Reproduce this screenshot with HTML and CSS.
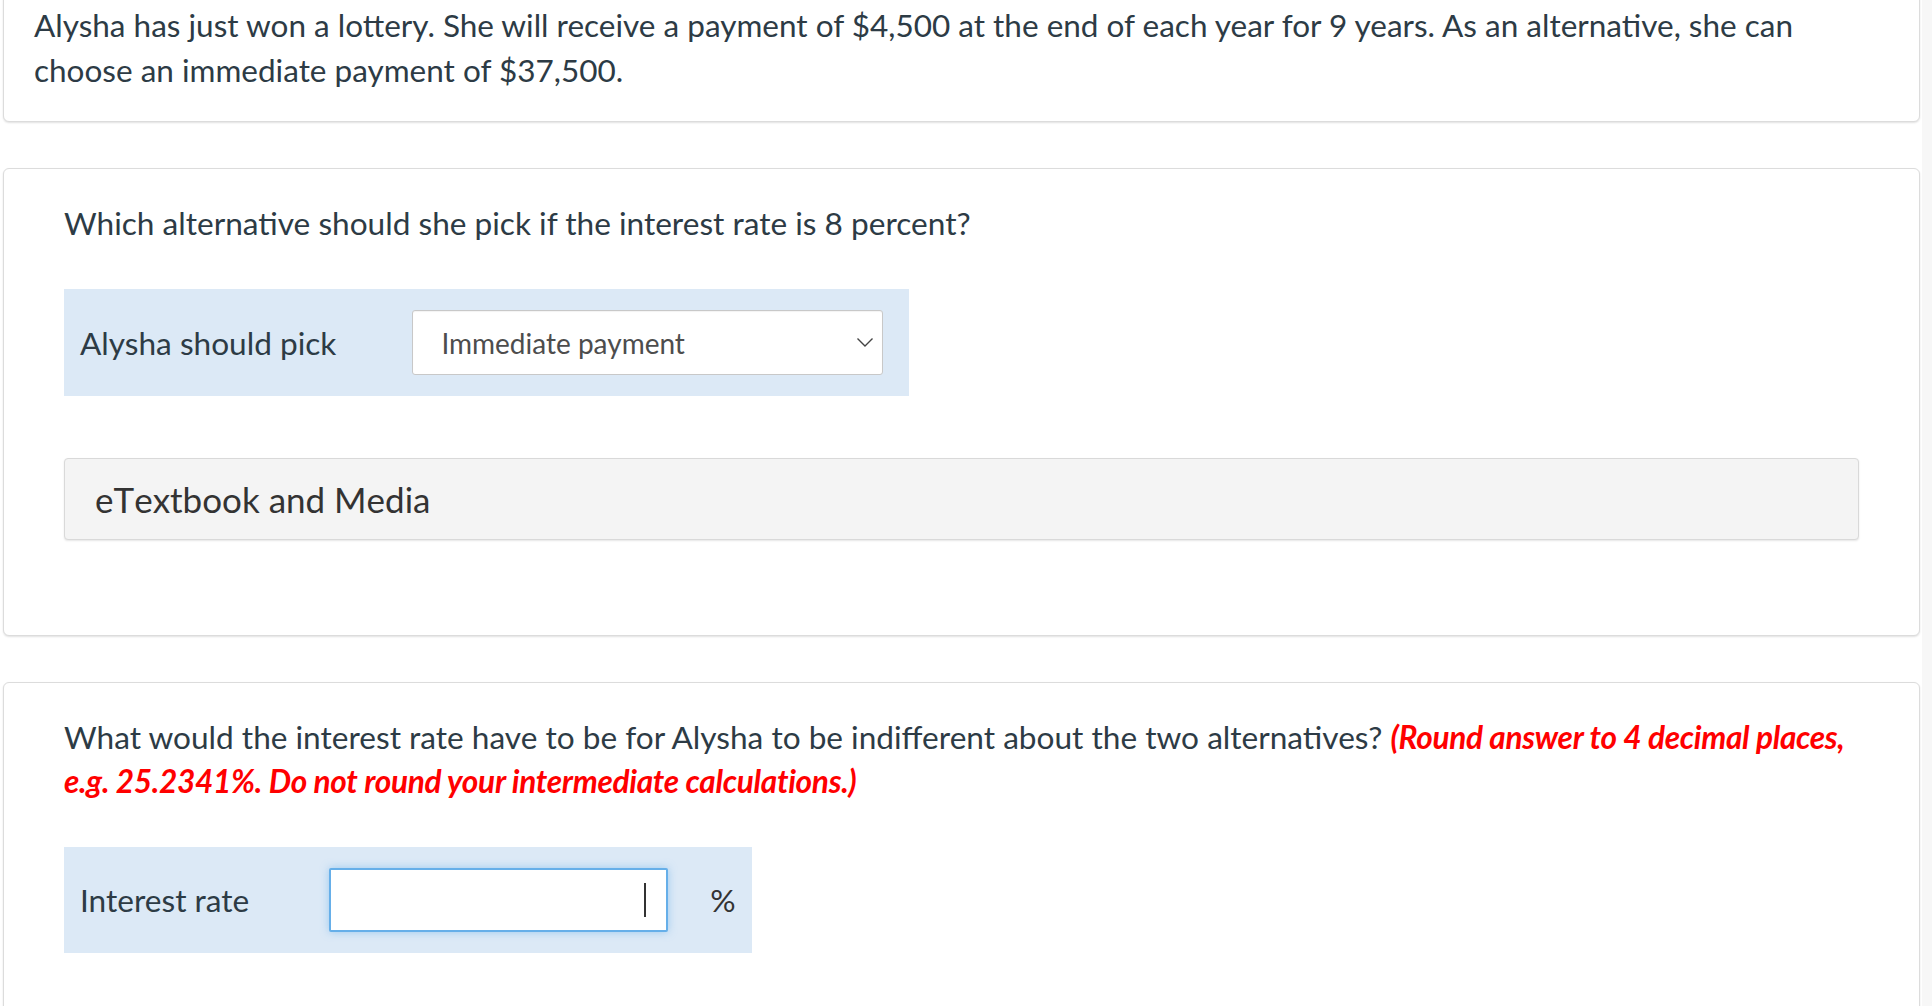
FILE: index.html
```html
<!DOCTYPE html>
<html lang="en">
<head>
<meta charset="utf-8">
<title>Question</title>
<link rel="stylesheet" href="styles.css">
</head>
<body>
<div class="page">
  <main class="content">
    <section class="card card-intro">
      <p class="intro-text">Alysha has just won a lottery. She will receive a payment of $4,500 at the end of each year for 9 years. As an alternative, she can choose an immediate payment of $37,500.</p>
    </section>

    <section class="card card-part">
      <p class="question">Which alternative should she pick if the interest rate is 8 percent?</p>
      <div class="answer-row answer-row-select">
        <span class="answer-label">Alysha should pick</span>
        <div class="select-box">
          <span class="select-value">Immediate payment</span>
          <svg class="chevron" width="18" height="11" viewBox="0 0 18 11" aria-hidden="true"><path d="M1.5 1.5 L9 9 L16.5 1.5" fill="none" stroke="#444" stroke-width="1.4"/></svg>
        </div>
      </div>
      <div class="media-box">eTextbook and Media</div>
    </section>

    <section class="card card-part card-last">
      <p class="question">What would the interest rate have to be for Alysha to be indifferent about the two alternatives? <em class="hint">(Round answer to 4 decimal places, e.g. 25.2341%. Do not round your intermediate calculations.)</em></p>
      <div class="answer-row answer-row-input">
        <span class="answer-label">Interest rate</span>
        <div class="text-input"><span class="caret"></span></div>
        <span class="unit">%</span>
      </div>
    </section>
  </main>
  <div class="scroll-track"></div>
</div>
</body>
</html>
```

FILE: styles.css
```css
html, body {
  margin: 0;
  padding: 0;
  background: #ffffff;
  height: 100%;
  overflow: hidden;
}

body {
  font-family: "Lato", "Liberation Sans", sans-serif;
  color: #2d3b45;
}

.page {
  display: flex;
  height: 1006px;
  overflow: hidden;
}

.content {
  flex: 1;
  padding: 0 2px 0 3px;
  display: flex;
  flex-direction: column;
  gap: 46px;
}

.scroll-track {
  width: 10px;
  background: #f7f7f7;
  flex-shrink: 0;
}

.card {
  background: #ffffff;
  border: 1px solid #dcdcdc;
  border-radius: 6px;
  box-shadow: 0 1px 2px rgba(0, 0, 0, 0.12);
  flex-shrink: 0;
}

.card-intro {
  margin-top: -30px;
  padding: 32px 30px 28px 30px;
}

.intro-text {
  margin: 0;
  font-size: 31.5px;
  line-height: 45px;
}

.card-part {
  padding: 32px 60px 95px 60px;
}

.question {
  margin: 0 0 44px 0;
  font-size: 31.6px;
  line-height: 44px;
}

.hint {
  color: #ff0000;
  font-weight: 700;
  font-style: italic;
  letter-spacing: -0.3px;
}

.answer-row {
  display: inline-flex;
  align-items: center;
  background: #dce9f6;
  padding: 21px 16px;
  align-self: flex-start;
}

.answer-label {
  font-size: 31.6px;
  color: #2d3b45;
  margin-right: 76px;
}

.select-box {
  width: 471px;
  height: 65px;
  box-sizing: border-box;
  background: #ffffff;
  border: 1px solid #c8c8c8;
  border-radius: 3px;
  display: flex;
  align-items: center;
  justify-content: space-between;
  padding: 0 8px 0 28px;
  margin-right: 10px;
  box-shadow: inset 0 1px 1px rgba(0, 0, 0, 0.05);
}

.select-value {
  font-size: 28px;
  color: #4d4d4d;
}

.chevron {
  display: block;
}

.media-box {
  margin-top: 62px;
  height: 82px;
  box-sizing: border-box;
  background: #f4f4f4;
  border: 1px solid #d9d9d9;
  border-radius: 4px;
  box-shadow: 0 1px 2px rgba(0, 0, 0, 0.1);
  display: flex;
  align-items: center;
  padding-left: 30px;
  font-size: 35px;
  font-kerning: none;
  color: #333333;
}

.text-input {
  width: 339px;
  height: 64px;
  box-sizing: border-box;
  background: #ffffff;
  border: 2px solid #66afe9;
  border-radius: 2px;
  box-shadow: 0 0 9px rgba(102, 175, 233, 0.55);
  display: flex;
  align-items: center;
  justify-content: flex-end;
  padding-right: 20px;
}

.caret {
  width: 2px;
  height: 34px;
  background: #333333;
}

.unit {
  margin-left: 42px;
  font-size: 31.6px;
  color: #333333;
}

.answer-row-input .answer-label {
  margin-right: 80px;
}
```
